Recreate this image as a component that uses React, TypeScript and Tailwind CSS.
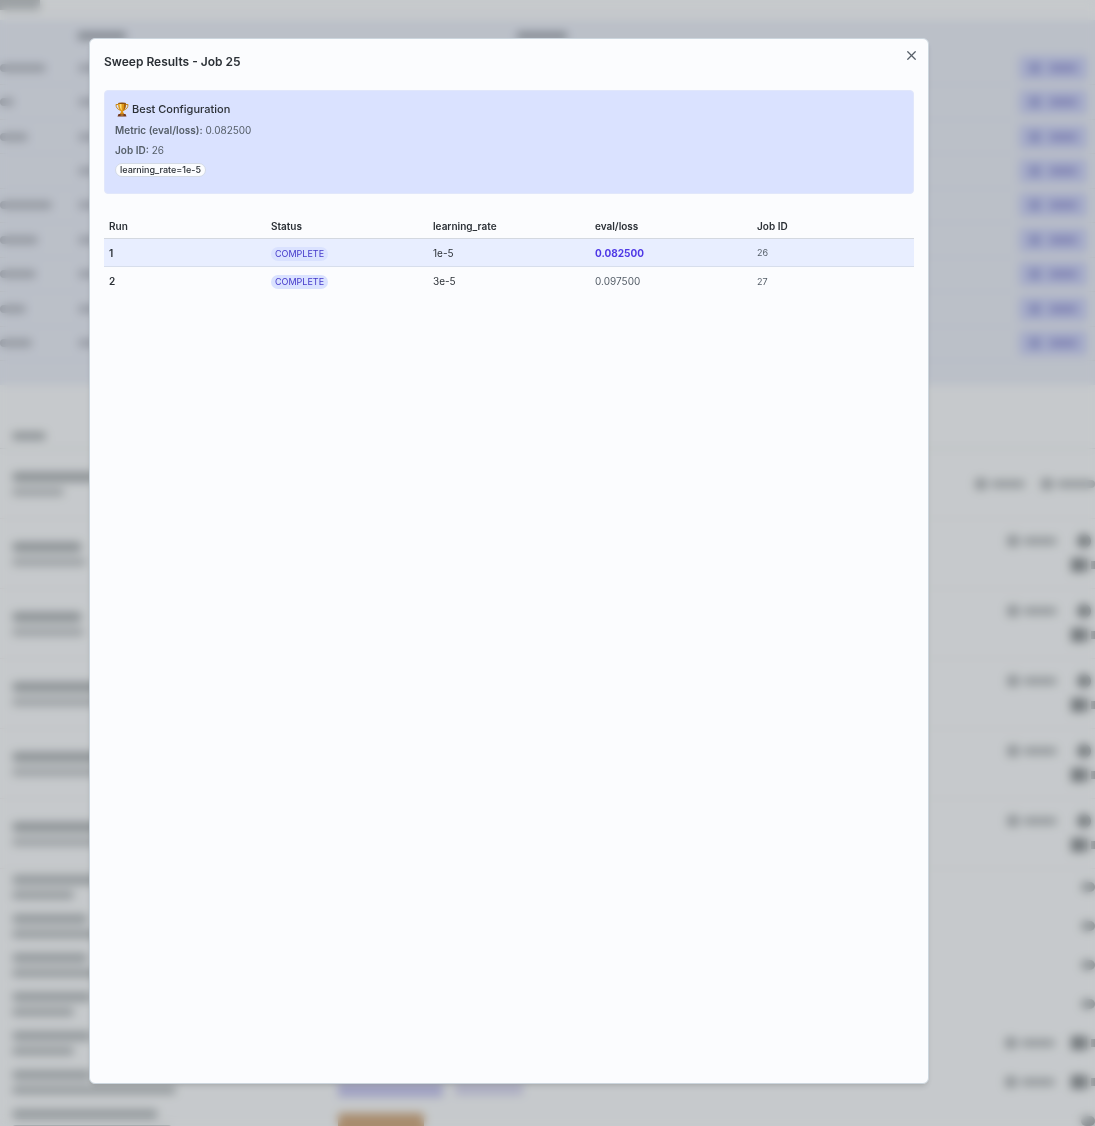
import { X } from "lucide-react";

const jobs = [46, 14, 28, 0, 52, 38, 36, 26, 32];

const models = [
  { title: 84, detail: 52, actions: "wide" },
  { title: 70, detail: 74, actions: "double" },
  { title: 70, detail: 72, actions: "double" },
  { title: 90, detail: 90, actions: "double" },
  { title: 90, detail: 90, actions: "double" },
  { title: 90, detail: 90, actions: "double" },
];

const datasets = [
  { title: 90, detail: 62, actions: "single", tags: "" },
  { title: 76, detail: 90, actions: "single", tags: "" },
  { title: 76, detail: 90, actions: "single", tags: "" },
  { title: 80, detail: 62, actions: "single", tags: "" },
  { title: 80, detail: 62, actions: "pair", tags: "" },
  { title: 80, detail: 164, actions: "pair", tags: "indigo" },
  { title: 146, detail: 160, actions: "single", tags: "orange" },
];

const runs = [
  { run: 1, status: "COMPLETE", rate: "1e-5", loss: "0.082500", job: 26, best: true },
  { run: 2, status: "COMPLETE", rate: "3e-5", loss: "0.097500", job: 27, best: false },
];

function Bar({ width, className }: { width: number; className: string }) {
  return <div className={`shrink-0 ${className}`} style={{ width }} />;
}

function Action({ width }: { width: number }) {
  return (
    <div className="flex items-center gap-1">
      <div className="size-3 rounded-sm bg-[#b6bcc0]" />
      <Bar width={width} className="h-2 rounded-full bg-[#bbc1c5]" />
    </div>
  );
}

function Actions({ kind }: { kind: string }) {
  if (kind === "wide") {
    return (
      <div className="flex gap-4">
        <Action width={34} />
        <Action width={38} />
      </div>
    );
  }
  if (kind === "double") {
    return (
      <div className="flex flex-col items-end gap-2.5 pb-0.5">
        <div className="flex items-center gap-5 pr-1">
          <Action width={34} />
          <div className="size-3.5 rounded-full bg-[#8f969a]" />
        </div>
        <div className="flex items-center gap-1">
          <div className="h-3.5 w-4 bg-[#8f969a]" />
          <div className="h-2 w-1 bg-[#a4aaae]" />
        </div>
      </div>
    );
  }
  if (kind === "pair") {
    return (
      <div className="flex items-center gap-4">
        <Action width={34} />
        <div className="flex items-center gap-1">
          <div className="h-3.5 w-4 bg-[#8f969a]" />
          <div className="h-2 w-1 bg-[#a4aaae]" />
        </div>
      </div>
    );
  }
  return <div className="h-2.5 w-3.5 rounded-full bg-[#adb4b8]" />;
}

function Background() {
  return (
    <div aria-hidden="true" className="absolute inset-0 overflow-hidden bg-[#f8fcff]">
      <div className="h-5">
        <Bar width={40} className="h-2.5 bg-[#c4cace]" />
      </div>
      <div className="bg-[#eaf0fb] pb-6">
        <div className="flex h-[31px] items-center">
          <div className="w-[78px]" />
          <div className="w-[439px]">
            <Bar width={48} className="h-2 bg-[#a2a9b3]" />
          </div>
          <Bar width={50} className="h-2 bg-[#a2a9b3]" />
        </div>
        <div className="flex h-[310px] flex-col">
          {jobs.map((name, i) => (
            <div key={i} className="flex flex-1 items-center border-b border-[#e2e7eb]">
              <div className="w-[78px]">
                <Bar width={name} className="h-2 rounded-full bg-[#b8bec8]" />
              </div>
              <div className="flex-1">
                <Bar width={60} className="h-2 rounded-full bg-[#bcc2ce]" />
              </div>
              <div className="mr-2 flex h-6 w-[68px] items-center gap-2 rounded bg-[#ced6fb] px-2.5">
                <div className="size-3 rounded-full bg-[#a3aae2]" />
                <div className="h-2 flex-1 rounded-full bg-[#a4a8e3]" />
              </div>
            </div>
          ))}
        </div>
      </div>
      <div className="flex h-16 items-end border-b border-[#e2e8eb] px-3 pb-2">
        <Bar width={34} className="h-2 rounded-full bg-[#b0b7bb]" />
      </div>
      {models.map((model, i) => (
        <div
          key={i}
          className="flex h-[70px] items-center justify-between border-b border-[#f0f2f5] pl-3"
        >
          <div className="flex flex-col gap-1.5">
            <Bar width={model.title} className="h-2.5 rounded-full bg-[#b0b7bb]" />
            <Bar width={model.detail} className="h-2 rounded-full bg-[#c2c8cc]" />
          </div>
          <Actions kind={model.actions} />
        </div>
      ))}
      {datasets.map((data, i) => (
        <div key={i} className="flex h-[39px] items-center pb-1 pl-3">
          <div className="flex w-[326px] flex-col gap-1.5">
            <Bar width={data.title} className="h-2.5 rounded-full bg-[#bac1c5]" />
            <Bar width={data.detail} className="h-2 rounded-full bg-[#b8bfc3]" />
          </div>
          <div className="flex-1">
            {data.tags === "indigo" && (
              <div className="flex gap-3 pt-4">
                <Bar width={105} className="h-3.5 bg-[#c7c9f3]" />
                <Bar width={68} className="h-3 bg-[#d8d9f4]" />
              </div>
            )}
            {data.tags === "orange" && (
              <Bar width={86} className="h-4 rounded bg-[#d3b08a]" />
            )}
          </div>
          <Actions kind={data.actions} />
        </div>
      ))}
    </div>
  );
}

function Trophy() {
  return (
    <svg viewBox="0 0 28 30" className="h-[15px] w-3.5" aria-hidden="true">
      <path
        d="M7 5H2c0 6 3 10 8 11M21 5h5c0 6-3 10-8 11"
        fill="none"
        stroke="#c98a1e"
        strokeWidth="2"
      />
      <path d="M6 2h16c0 9-2 14-6 17v4h-4v-4C8 16 6 11 6 2z" fill="#e09a1a" />
      <path d="M9 3h4c0 7 0 11 1 14-3-2-5-7-5-14z" fill="#ffe078" />
      <path d="M18 3h4c0 8-2 12-6 15 2-4 2-9 2-15z" fill="#a8620d" />
      <ellipse cx="14" cy="2.5" rx="8" ry="1.5" fill="#8c5010" />
      <path d="M11 21h6l2 4H9z" fill="#d58a17" />
      <path d="M7 24h14l2 5H5z" fill="#71371d" />
      <path d="M11 25h6v2h-6z" fill="#e0a332" />
    </svg>
  );
}

export default function App() {
  return (
    <div className="relative min-h-screen overflow-hidden font-['Inter',sans-serif] text-[#2b3036]">
      <Background />
      <div className="relative flex min-h-screen bg-black/20 pt-[38px] pr-[166px] pb-[42px] pl-[89px] backdrop-blur-[5px]">
        <div
          role="dialog"
          aria-labelledby="sweep-title"
          className="relative flex-1 rounded-md border border-[#ccd6de] bg-[#fbfcfe] px-3.5 shadow-md"
        >
          <button
            type="button"
            aria-label="Close"
            className="absolute top-2 right-[9px] flex size-4 items-center justify-center text-[#555e68]"
          >
            <X size={15} strokeWidth={2} />
          </button>
          <h2 id="sweep-title" className="pt-[13px] text-[12px] leading-5 font-semibold">
            Sweep Results - Job 25
          </h2>

          <section className="mt-[18px] rounded border border-[#e1e7fb] bg-[#dae2ff] px-2.5 pt-2.5 pb-4">
            <h3 className="flex items-center gap-[3px] text-[11px] leading-4 font-medium">
              <Trophy />
              Best Configuration
            </h3>
            <p className="mt-[5px] text-[10px] leading-4 text-[#555e68]">
              <strong className="font-semibold">Metric (eval/loss):</strong> 0.082500
            </p>
            <p className="mt-1 text-[10px] leading-4 text-[#555e68]">
              <strong className="font-semibold">Job ID:</strong> 26
            </p>
            <div className="mt-[5px] flex">
              <span className="rounded-full border border-[#d3dae6] bg-[#fbfcfe] px-1 text-[9px] leading-3 font-medium">
                learning_rate=1e-5
              </span>
            </div>
          </section>

          <table className="mt-5 w-full table-fixed text-left text-[10px]">
            <thead>
              <tr className="h-6 border-b border-[#d3d8e0]">
                <th className="px-[5px] pt-px font-semibold">Run</th>
                <th className="px-[5px] pt-px font-semibold">Status</th>
                <th className="px-[5px] pt-px font-semibold">learning_rate</th>
                <th className="px-[5px] pt-px font-semibold">eval/loss</th>
                <th className="px-[5px] pt-px font-semibold">Job ID</th>
              </tr>
            </thead>
            <tbody>
              {runs.map((row) => (
                <tr
                  key={row.run}
                  className={row.best ? "h-7 border-b border-[#d7deec] bg-[#e8eeff]" : "h-7"}
                >
                  <td className="px-[5px] pt-0.5 font-semibold">{row.run}</td>
                  <td className="px-[5px] pt-0.5">
                    <span className="inline-block rounded-full bg-[#dae2ff] px-1 text-[9px] leading-[14px] text-[#4338ca]">
                      {row.status}
                    </span>
                  </td>
                  <td className="px-[5px] pt-0.5">{row.rate}</td>
                  <td
                    className={
                      row.best
                        ? "px-[5px] pt-0.5 font-bold text-[#4f39e6]"
                        : "px-[5px] pt-0.5 text-[#555e68]"
                    }
                  >
                    {row.loss}
                  </td>
                  <td className="px-[5px] pt-0.5 text-[9px] text-[#555e68]">{row.job}</td>
                </tr>
              ))}
            </tbody>
          </table>
        </div>
      </div>
    </div>
  );
}
